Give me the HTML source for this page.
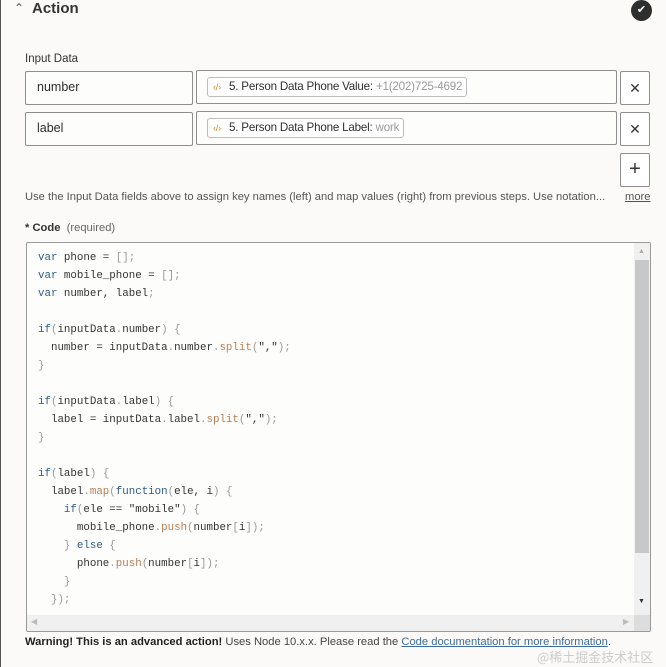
<!DOCTYPE html>
<html><head><meta charset="utf-8"><style>
*{box-sizing:border-box;margin:0;padding:0}
body{width:666px;height:667px;background:#fbfaf9;font-family:"Liberation Sans",Arial,sans-serif;color:#2d2e2e;position:relative;overflow:hidden;border-left:1px solid #555}
.abs{position:absolute}
.box{position:absolute;border:1px solid #8e8e8e;background:#fdfdfc;border-radius:2px}
.pill{position:absolute;border:1px solid #bdbdbd;border-radius:3px;font-size:11.6px;height:20px;line-height:18px;padding:0 4px 0 21px;background:#fff;letter-spacing:-0.2px;white-space:nowrap}
.pill i{position:absolute;left:5px;top:0;font-style:normal;color:#c98a2a;font-size:9px}
.pill span{color:#999}
.x{position:absolute;width:30px;border:1px solid #8e8e8e;border-radius:2px;background:#fff;text-align:center;font-size:14px;color:#333}
pre{font-family:"Liberation Mono",monospace;font-size:10.8px;line-height:18px;color:#333}
.k{color:#2e5c87}.p{color:#999}.m{color:#b38055}
</style></head><body>
<div class="abs" style="left:13px;top:1px;font-size:12px;color:#555">⌃</div>
<div class="abs" style="left:31px;top:0px;font-size:15px;color:#333;font-weight:bold">Action</div>
<div class="abs" style="left:630px;top:0px;width:21px;height:21px;border-radius:50%;background:#2d2e2e;color:#fff;text-align:center;font-size:11px;line-height:21px">✔</div>
<div class="abs" style="left:24px;top:53px;font-size:11.5px;color:#333">Input Data</div>
<div class="box" style="left:24px;top:71px;width:168px;height:34px"></div>
<div class="abs" style="left:36px;top:80px;font-size:12.5px">number</div>
<div class="box" style="left:195px;top:70px;width:421px;height:34px"></div>
<div class="pill" style="left:206px;top:77px"><i>‹/›</i>5. Person Data Phone Value: <span>+1(202)725-4692</span></div>
<div class="x" style="left:619px;top:71px;height:34px;line-height:32px">✕</div>
<div class="box" style="left:24px;top:112px;width:168px;height:34px"></div>
<div class="abs" style="left:36px;top:121px;font-size:12.5px">label</div>
<div class="box" style="left:195px;top:111px;width:421px;height:34px"></div>
<div class="pill" style="left:206px;top:118px"><i>‹/›</i>5. Person Data Phone Label: <span>work</span></div>
<div class="x" style="left:619px;top:112px;height:34px;line-height:32px">✕</div>
<div class="x" style="left:619px;top:153px;height:34px;line-height:30px;font-size:20px">+</div>
<div class="abs" style="left:24px;top:191px;font-size:11.2px;color:#555;white-space:nowrap">Use the Input Data fields above to assign key names (left) and map values (right) from previous steps. Use notation...</div>
<div class="abs" style="left:624px;top:191px;font-size:11.2px;color:#555;text-decoration:underline">more</div>
<div class="abs" style="left:24px;top:222px;font-size:11.2px"><b style="font-weight:bold;color:#333">* Code</b> <span style="color:#666">&nbsp;(required)</span></div>
<div class="box" style="left:25px;top:242px;width:625px;height:390px;background:#fdfdfc;border-color:#999;overflow:hidden">
<pre class="abs" style="left:11px;top:6px"><span class="k">var</span> phone = <span class="p">[];</span>
<span class="k">var</span> mobile_phone = <span class="p">[];</span>
<span class="k">var</span> number, label<span class="p">;</span>

<span class="k">if</span><span class="p">(</span>inputData<span class="p">.</span>number<span class="p">) {</span>
  number = inputData<span class="p">.</span>number<span class="p">.</span><span class="m">split</span><span class="p">(</span>","<span class="p">);</span>
<span class="p">}</span>

<span class="k">if</span><span class="p">(</span>inputData<span class="p">.</span>label<span class="p">) {</span>
  label = inputData<span class="p">.</span>label<span class="p">.</span><span class="m">split</span><span class="p">(</span>","<span class="p">);</span>
<span class="p">}</span>

<span class="k">if</span><span class="p">(</span>label<span class="p">) {</span>
  label<span class="p">.</span><span class="m">map</span><span class="p">(</span><span class="k">function</span><span class="p">(</span>ele, i<span class="p">) {</span>
    <span class="k">if</span><span class="p">(</span>ele == "mobile"<span class="p">) {</span>
      mobile_phone<span class="p">.</span><span class="m">push</span><span class="p">(</span>number<span class="p">[</span>i<span class="p">]);</span>
    <span class="p">}</span> <span class="k">else</span> <span class="p">{</span>
      phone<span class="p">.</span><span class="m">push</span><span class="p">(</span>number<span class="p">[</span>i<span class="p">]);</span>
    <span class="p">}</span>
  <span class="p">});</span></pre>
<div class="abs" style="left:607px;top:0;width:16px;height:372px;background:#f0f0f0"></div>
<div class="abs" style="left:608px;top:17px;width:14px;height:293px;background:#c8c8c8"></div>
<div class="abs" style="left:611px;top:5px;font-size:7px;color:#aaa">▲</div>
<div class="abs" style="left:611px;top:355px;font-size:7px;color:#333">▼</div>
<div class="abs" style="left:0;top:372px;width:607px;height:17px;background:#f0f0f0"></div>
<div class="abs" style="left:607px;top:372px;width:16px;height:17px;background:#ddd"></div>
<div class="abs" style="left:4px;top:374px;font-size:8px;color:#bbb">◀</div>
<div class="abs" style="left:596px;top:374px;font-size:8px;color:#bbb">▶</div>
</div>
<div class="abs" style="left:24px;top:636px;font-size:11.2px;color:#444;white-space:nowrap"><b style="color:#222">Warning! This is an advanced action!</b> Uses Node 10.x.x. Please read the <span style="color:#3c6e96;text-decoration:underline">Code documentation for more information</span>.</div>
<div class="abs" style="left:536px;top:647px;font-size:13px;color:#ccc;font-family:'Noto Sans CJK SC',sans-serif">@稀土掘金技术社区</div>
</body></html>
